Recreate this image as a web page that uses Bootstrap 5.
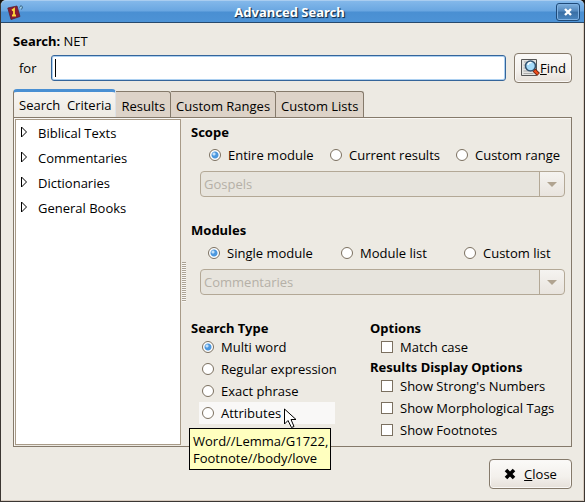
<!DOCTYPE html>
<html lang="en">
<head>
<meta charset="utf-8">
<meta name="viewport" content="width=device-width, initial-scale=1">
<title>Advanced Search</title>
<link href="https://cdn.jsdelivr.net/npm/bootstrap@5.3.0/dist/css/bootstrap.min.css" rel="stylesheet">
<style>
:root { --face: #edeae3; --edge: #857a6b; --soft: #b3a896; --blue: #4a90d3; }
body { background: #17130f; color: #000; font: 13px/16px "Open Sans", "Noto Sans", sans-serif; }
.dialog { background: var(--face); border: 1px solid #3b3632; border-top: 0; border-radius: 6px 6px 0 0; box-shadow: inset -1px -1px #d6cabe; }
.titlebar { height: 23px; border-radius: 5px 5px 0 0; border-top: 1px solid #a9cdf0; border-bottom: 1px solid #27496d; padding: 0 4px 0 6px;
  background: linear-gradient(#83b8ea, #69a6e1 48%, #4a8fd2 52%, #4d93d6); }
.titlebar h1 { font-family: "Noto Sans", sans-serif; font-size: 13px; line-height: 20px; color: #fff; text-shadow: 1px 1px 1px #16324f, 1px 1px #2b5380; }
.shut { width: 24px; height: 18px; border: 1px solid #1f4a78; border-radius: 3px; background: linear-gradient(#7fb0de, #5388bd 45%, #396ea4 50%, #4a86c0); box-shadow: inset 0 0 0 1px #7fb1e2; }
.main-area { padding: 6px 12px 12px; }
.top-line { height: 24px; }
.top-line, .term { line-height: 24px; }
.top-line b { font-family: "Noto Sans", sans-serif; }
.term-label { width: 38px; padding-left: 6px; }
.entry { height: 26px; border: 1px solid #35659a; border-radius: 3px; box-shadow: inset 0 0 0 1px #acd0f1; font-size: 13px; outline: 0; caret-color: transparent; padding: 0 6px;
  background: linear-gradient(#000, #000) 3px 3px / 1px 18px no-repeat #fff; }
.push { height: 30px; border: 1px solid var(--edge); border-radius: 4px; color: #000; background: linear-gradient(#fbfaf8, #f3f0ec 60%, #e6e0d9); box-shadow: inset 0 0 0 1px #faf8f6; }
.find-btn { width: 58px; }
.close-btn { width: 83px; }
.tabs { margin-top: 6px; border: 0; }
.tabs .nav-link { color: #000; height: 26px; padding: 0 5px; line-height: 28px; border: 1px solid var(--edge); border-left: 0; border-bottom: 0; border-radius: 0 3px 0 0; background: #ddd3c8; margin: 2px 0 0; white-space: nowrap; }
.tabs .nav-link.active { height: 28px; margin: 0 0 -1px; padding: 0 4px 0 5px; border-left: 1px solid var(--edge); border-top: 3px solid var(--blue); border-radius: 4px 4px 0 0; background: linear-gradient(#f7f5f2, var(--face)); position: relative; white-space: pre; line-height: 24px; color: #000; }
.pane { border: 1px solid var(--edge); padding: 1px; box-shadow: inset 1px 1px #faf8f5; }
.tree { width: 166px; border: 1px solid #a89b88; background: #fff; padding-top: 1px; }
.tree button { height: 25px; gap: 10px; padding: 0 4px; line-height: 25px; }
.tree svg { margin-top: -3px; }
.grip { width: 6px; height: 40px; padding: 0 1px; }
.grip div { height: 40px; background: repeating-linear-gradient(#aaa294 0 1px, #faf8f5 1px 2px); }
.criteria { padding: 5px 5px 0 4px; }
.group + .group { margin-top: 25px; }
h2 { font-family: "Noto Sans", sans-serif; font-size: 13px; line-height: 16px; font-weight: 700; margin: 0; }
.choices { display: grid; height: 24px; margin: 3px 0 4px 17px; align-items: center; }
.scope-cols { grid-template-columns: 121fr 126fr 109fr; padding-left: 1px; }
.module-cols { grid-template-columns: 133fr 123fr 101fr; }
.opt { display: flex; align-items: center; gap: 7px; white-space: nowrap; }
.opt input { appearance: none; flex: none; width: 12px; height: 12px; margin: 0; border: 1px solid #7b7060; background: #fff; }
.opt input[type=radio] { border-radius: 50%; }
.opt input[type=radio]:checked { background: radial-gradient(circle at 4px 4px, #c4e0f8 0 1px, transparent 2px), radial-gradient(circle at 5px 5px, #4d98de 0 3px, transparent 4px) #fff; }
.combo { margin-left: 9px; width: calc(100% - 9px); height: 26px; border: 1px solid var(--soft); border-radius: 4px; color: #b5b0a7; font-size: 13px; line-height: 24px; padding: 0 30px 0 3px; appearance: none; opacity: 1;
  background: url("data:image/svg+xml,%3Csvg xmlns='http://www.w3.org/2000/svg' width='10' height='5'%3E%3Cpath d='M0 0h10L5 5z' fill='%23b0a390'/%3E%3C/svg%3E") right 7px center no-repeat,
  linear-gradient(#f5f3f0, #e9e4de) right / 24px 100% no-repeat, linear-gradient(var(--soft), var(--soft)) right 24px top / 1px 100% no-repeat, #e7e4dd; }
.stack .opt { height: 22px; }
.kinds .opt { padding-left: 3px; margin-left: 8px; width: 136px; }
.kinds .opt.hot { background: #f9f8f7; position: relative; }
.flags { width: 195px; }
.flags .opt { padding-left: 11px; }
.flags h2 + .opt + h2 { margin-top: 1px; }
.tip { position: absolute; left: -10px; top: 26px; z-index: 2; border: 1px solid #000; background: #ffffbf; padding: 4px 2px 2px 3px; line-height: 17px; min-width: 136px; height: 42px; }
.pointer { position: absolute; left: 85px; top: 6px; z-index: 3; }
.foot { padding-top: 12px; }
</style>
<script src="https://cdn.jsdelivr.net/npm/bootstrap@5.3.0/dist/js/bootstrap.bundle.min.js"></script>
</head>
<body>
<div class="dialog min-vh-100 d-flex flex-column">
  <header class="titlebar d-flex align-items-center">
    <svg class="flex-shrink-0" width="16" height="16" viewBox="0 0 16 16" aria-hidden="true"><path d="M.8 4 10 2l3 10.500-9 3z" fill="#8b1c33" stroke="#5a2233" stroke-width=".8"/><path d="M5 6.500 7 5v6m-2 .5h4" stroke="#ffd83a" stroke-width="1.800" fill="none"/><path d="m12.500 3.500 1.500-2 1.500 1.500-1 2.500" stroke="#214968" stroke-width=".8" fill="#9fd0ea"/></svg>
    <h1 class="flex-grow-1 text-center fw-bold m-0">Advanced Search</h1>
    <button class="shut p-0 d-flex align-items-center justify-content-center" aria-label="Close window"><svg width="10" height="8" viewBox="0 0 10 8"><path d="m2 1 6 6M8 1 2 7" stroke="#fff" stroke-width="2.4"/></svg></button>
  </header>
  <main class="main-area flex-grow-1 d-flex flex-column">
    <div class="top-line"><b>Search:</b> NET</div>
    <form class="term d-flex align-items-center" onsubmit="return false">
      <label class="term-label" for="term">for</label>
      <input id="term" class="entry flex-grow-1" type="text">
      <button class="push find-btn ms-2 p-0 d-flex align-items-center justify-content-center">
        <svg width="20" height="20" viewBox="0 0 20 20" class="flex-shrink-0" aria-hidden="true"><path d="M1.500 1.500h15v16h-15z" fill="#e4e4e2" stroke="#555"/><path d="M4 4h3M3.500 7h3M3.500 10h3M3.500 13h5M3.500 15.500h10" stroke="#aaa"/><circle cx="10.500" cy="8" r="5" fill="#a5dbfa" stroke="#34536f" stroke-width="1.600"/><path d="M8 7c0-2 2-3 3.500-2" stroke="#fff" stroke-width="1.500" fill="none"/><path d="m14 12 4.500 4.500" stroke="#702411" stroke-width="4"/><path d="m14.500 12.500 3.500 3.500" stroke="#ee4b1a" stroke-width="2.400"/></svg>
        <span><u>F</u>ind</span></button>
    </form>
    <ul class="nav nav-tabs tabs flex-nowrap" role="tablist">
      <li class="nav-item"><button class="nav-link active" role="tab" aria-selected="true">Search  Criteria</button></li>
      <li class="nav-item"><button class="nav-link" role="tab">Results</button></li>
      <li class="nav-item"><button class="nav-link" role="tab">Custom Ranges</button></li>
      <li class="nav-item"><button class="nav-link" role="tab">Custom Lists</button></li>
    </ul>
    <div class="pane flex-grow-1 d-flex">
      <ul class="tree list-unstyled m-0 flex-shrink-0">
        <li><button class="border-0 bg-transparent d-flex align-items-center w-100"><svg width="8" height="12" viewBox="0 0 8 12"><path d="M1.500 1v10l5-5z" fill="#fff" stroke="#000"/></svg>Biblical Texts</button></li>
        <li><button class="border-0 bg-transparent d-flex align-items-center w-100"><svg width="8" height="12" viewBox="0 0 8 12"><path d="M1.500 1v10l5-5z" fill="#fff" stroke="#000"/></svg>Commentaries</button></li>
        <li><button class="border-0 bg-transparent d-flex align-items-center w-100"><svg width="8" height="12" viewBox="0 0 8 12"><path d="M1.500 1v10l5-5z" fill="#fff" stroke="#000"/></svg>Dictionaries</button></li>
        <li><button class="border-0 bg-transparent d-flex align-items-center w-100"><svg width="8" height="12" viewBox="0 0 8 12"><path d="M1.500 1v10l5-5z" fill="#fff" stroke="#000"/></svg>General Books</button></li>
      </ul>
      <div class="grip align-self-center flex-shrink-0"><div></div></div>
      <div class="criteria flex-grow-1">
        <section class="group">
          <h2>Scope</h2>
          <div class="choices scope-cols">
            <label class="opt"><input type="radio" name="scope" checked>Entire module</label>
            <label class="opt"><input type="radio" name="scope">Current results</label>
            <label class="opt"><input type="radio" name="scope">Custom range</label>
          </div>
          <select class="combo d-block" aria-label="Custom range" disabled><option>Gospels</option></select>
        </section>
        <section class="group">
          <h2>Modules</h2>
          <div class="choices module-cols">
            <label class="opt"><input type="radio" name="mods" checked>Single module</label>
            <label class="opt"><input type="radio" name="mods">Module list</label>
            <label class="opt"><input type="radio" name="mods">Custom list</label>
          </div>
          <select class="combo d-block" aria-label="Custom list" disabled><option>Commentaries</option></select>
        </section>
        <div class="group d-flex justify-content-between">
          <section class="stack kinds">
            <h2>Search Type</h2>
            <label class="opt"><input type="radio" name="kind" checked>Multi word</label>
            <label class="opt"><input type="radio" name="kind">Regular expression</label>
            <label class="opt"><input type="radio" name="kind">Exact phrase</label>
            <div class="opt hot"><input type="radio" name="kind" id="attr" aria-describedby="tip"><label for="attr">Attributes</label>
              <div class="tip" id="tip" role="tooltip">Word//Lemma/G1722,<br>Footnote//body/love</div>
              <svg class="pointer" width="13" height="21" viewBox="0 0 13 21" aria-hidden="true"><path d="M.5 1v15l3.500-3.500 3.500 7 2.500-1-3-7h5z" fill="#fff" stroke="#000"/></svg>
            </div>
          </section>
          <section class="stack flags">
            <h2>Options</h2>
            <label class="opt"><input type="checkbox">Match case</label>
            <h2>Results Display Options</h2>
            <label class="opt"><input type="checkbox">Show Strong's Numbers</label>
            <label class="opt"><input type="checkbox">Show Morphological Tags</label>
            <label class="opt"><input type="checkbox">Show Footnotes</label>
          </section>
        </div>
      </div>
    </div>
    <footer class="foot d-flex justify-content-end">
      <button class="push close-btn p-0 d-flex align-items-center justify-content-center gap-2"><svg width="12" height="12" viewBox="0 0 12 12" aria-hidden="true"><path d="m2 2 8 8M10 2l-8 8" stroke="#000" stroke-width="3.600"/></svg><span><u>C</u>lose</span></button>
    </footer>
  </main>
</div>
</body>
</html>
